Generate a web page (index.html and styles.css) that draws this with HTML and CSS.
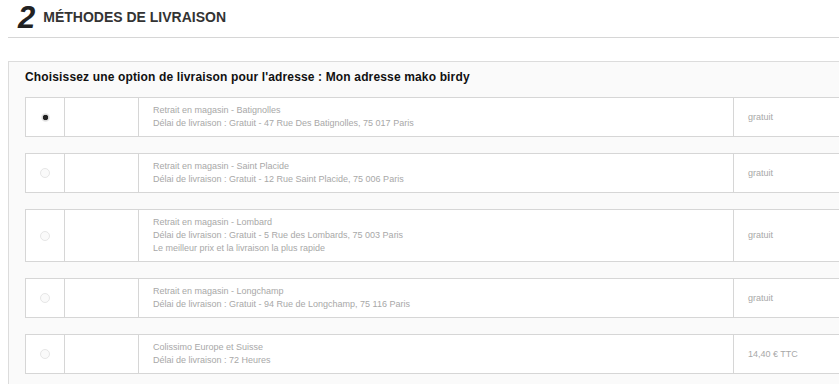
FILE: index.html
```html
<!DOCTYPE html>
<html lang="fr">
<head>
  <meta charset="UTF-8">
  <title>Méthodes de livraison</title>
  <link rel="stylesheet" href="styles.css">
</head>
<body>
  <div class="step-title">
    <span class="step-num">2</span>
    <h2>MÉTHODES DE LIVRAISON</h2>
  </div>
  <div class="delivery-box">
    <p class="delivery-intro">Choisissez une option de livraison pour l'adresse : Mon adresse mako birdy</p>

    <table class="carrier">
      <colgroup><col class="w-radio"><col class="w-logo"><col><col class="w-price"></colgroup>
      <tr>
        <td class="c-radio"><span class="radio checked"></span></td>
        <td class="c-logo"></td>
        <td class="c-info">Retrait en magasin - Batignolles<br>Délai de livraison : Gratuit - 47 Rue Des Batignolles, 75 017 Paris</td>
        <td class="c-price">gratuit</td>
      </tr>
    </table>

    <table class="carrier">
      <colgroup><col class="w-radio"><col class="w-logo"><col><col class="w-price"></colgroup>
      <tr>
        <td class="c-radio"><span class="radio"></span></td>
        <td class="c-logo"></td>
        <td class="c-info">Retrait en magasin - Saint Placide<br>Délai de livraison : Gratuit - 12 Rue Saint Placide, 75 006 Paris</td>
        <td class="c-price">gratuit</td>
      </tr>
    </table>

    <table class="carrier">
      <colgroup><col class="w-radio"><col class="w-logo"><col><col class="w-price"></colgroup>
      <tr>
        <td class="c-radio"><span class="radio"></span></td>
        <td class="c-logo"></td>
        <td class="c-info">Retrait en magasin - Lombard<br>Délai de livraison : Gratuit - 5 Rue des Lombards, 75 003 Paris<br>Le meilleur prix et la livraison la plus rapide</td>
        <td class="c-price">gratuit</td>
      </tr>
    </table>

    <table class="carrier">
      <colgroup><col class="w-radio"><col class="w-logo"><col><col class="w-price"></colgroup>
      <tr>
        <td class="c-radio"><span class="radio"></span></td>
        <td class="c-logo"></td>
        <td class="c-info">Retrait en magasin - Longchamp<br>Délai de livraison : Gratuit - 94 Rue de Longchamp, 75 116 Paris</td>
        <td class="c-price">gratuit</td>
      </tr>
    </table>

    <table class="carrier">
      <colgroup><col class="w-radio"><col class="w-logo"><col><col class="w-price"></colgroup>
      <tr>
        <td class="c-radio"><span class="radio"></span></td>
        <td class="c-logo"></td>
        <td class="c-info">Colissimo Europe et Suisse<br>Délai de livraison : 72 Heures</td>
        <td class="c-price">14,40 € TTC</td>
      </tr>
    </table>
  </div>
</body>
</html>
```

FILE: styles.css
```css
html, body {
  overflow: hidden;
}
body {
  margin: 0;
  padding: 0 0 0 8px;
  background: #fff;
  font-family: "Liberation Sans", Arial, sans-serif;
  width: 900px;
}
.step-title {
  display: flex;
  align-items: flex-start;
  gap: 8px;
  height: 37px;
  padding-left: 10px;
  border-bottom: 1px solid #d6d6d6;
}
.step-num {
  padding-top: 3px;
  font-size: 31px;
  font-weight: bold;
  font-style: italic;
  color: #222;
  line-height: 30px;
}
.step-title h2 {
  margin: 9px 0 0;
  font-size: 14px;
  font-weight: bold;
  color: #333;
  line-height: 16px;
}
.delivery-box {
  margin-top: 23px;
  padding: 8px 16px 1px 16px;
  background: #fafafa;
  border: 1px solid #dcdcdc;
}
.delivery-intro {
  margin: 0 0 13px;
  font-size: 12px;
  font-weight: bold;
  color: #111;
  line-height: 14px;
  letter-spacing: 0.15px;
}
.carrier {
  width: 840px;
  table-layout: fixed;
  border-collapse: collapse;
  background: #fff;
  margin-bottom: 16px;
}
.w-radio { width: 39px; }
.w-logo { width: 74px; }
.w-price { width: 131px; }
.carrier td {
  border: 1px solid #d6d6d6;
  font-size: 9px;
  line-height: 13px;
  color: #a8a8a8;
  padding: 6px 14px;
  height: 26px;
}
.c-radio {
  text-align: center;
  padding: 0 !important;
}
.c-logo {
  padding: 0 !important;
}
.radio {
  display: inline-block;
  width: 8px;
  height: 8px;
  border-radius: 50%;
  border: 1px solid #e6e6e6;
  background: #fafafa;
  vertical-align: middle;
}
.radio.checked {
  width: 9px;
  height: 9px;
  border: none;
  background: radial-gradient(circle, #222 0 2.5px, #d8d8d8 3px, #f2f2f2 4.5px);
}
```
